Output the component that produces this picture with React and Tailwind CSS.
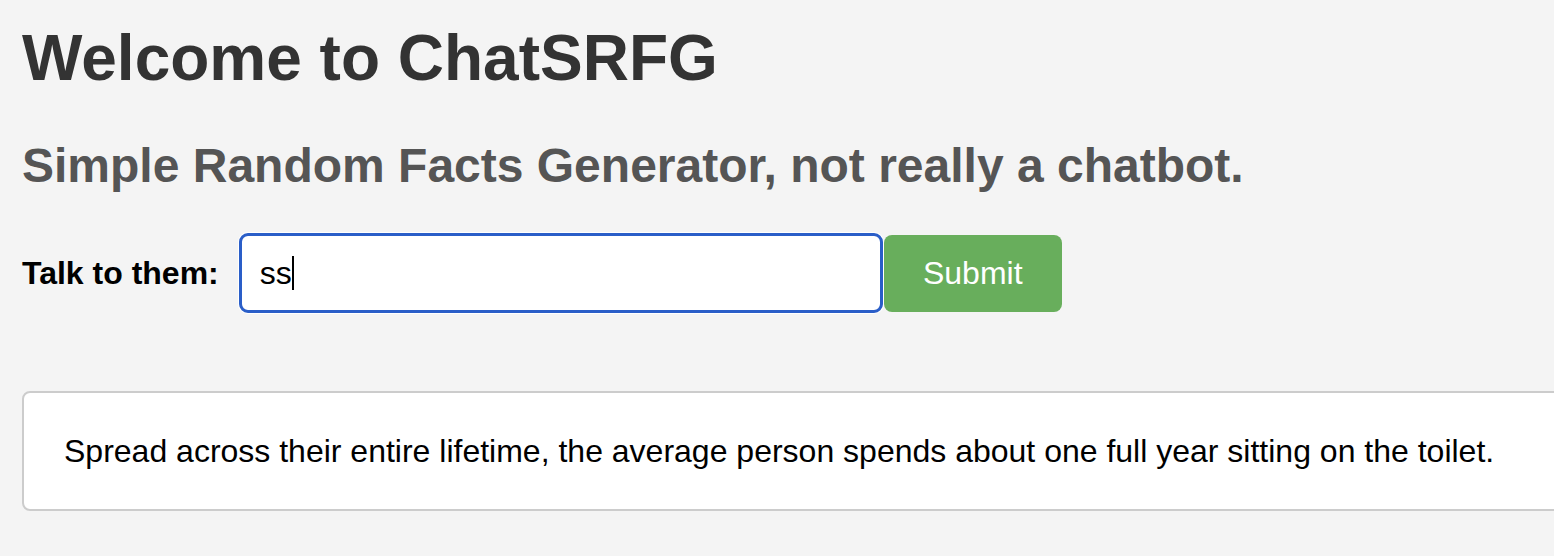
import React from 'react';

const App = () => {
  return (
    <div className="min-h-[556px] w-full overflow-hidden bg-[#f4f4f4] pl-[22px] pt-[21px] font-['Liberation_Sans',Arial,sans-serif]">
      <h1 className="text-[64px] font-bold leading-[74px] text-[#333333]">Welcome to ChatSRFG</h1>
      <h2 className="mt-[43px] text-[48px] font-bold leading-[56px] text-[#555555]">
        Simple Random Facts Generator, not really a chatbot.
      </h2>

      <div className="mt-[39px] flex items-center">
        <label className="text-[32px] font-bold leading-[37px] text-black">Talk to them:</label>
        <div className="ml-[20px] flex h-[80px] w-[644px] items-center rounded-[9px] border-[3px] border-[#2a5ec8] bg-white pl-[18px] ring-1 ring-white">
          <span className="text-[32px] leading-[37px] text-black">ss</span>
          <span className="h-[34px] w-[2px] bg-black"></span>
        </div>
        <button className="ml-[1px] h-[77px] w-[178px] rounded-lg bg-[#68ae5c] text-[32px] leading-[37px] text-white">
          Submit
        </button>
      </div>

      <div className="mt-[78px] flex h-[120px] w-[1600px] items-center rounded-lg border-2 border-[#cccccc] bg-white pl-[40px]">
        <p className="text-[32px] leading-[37px] text-black">
          Spread across their entire lifetime, the average person spends about one full year sitting on the toilet.
        </p>
      </div>
    </div>
  );
};

export default App;
